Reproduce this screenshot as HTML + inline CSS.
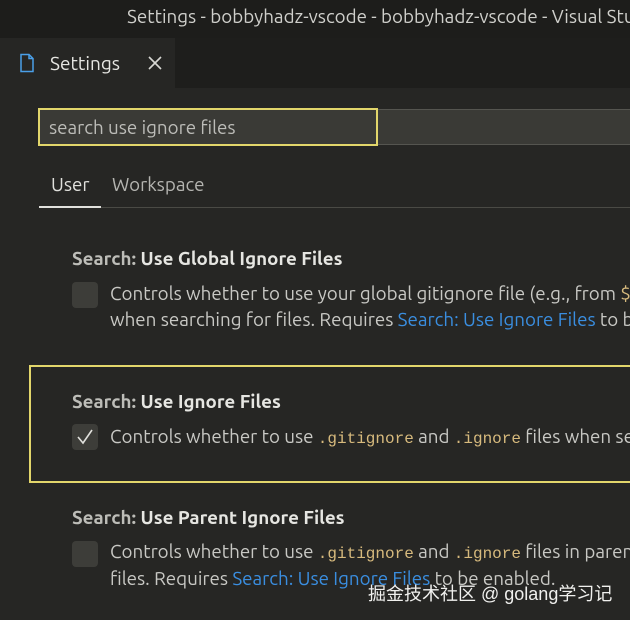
<!DOCTYPE html>
<html><head><meta charset="utf-8"><style>
*{margin:0;padding:0;box-sizing:border-box}
body{width:630px;height:620px;overflow:hidden;background:#262624;font-family:"Ubuntu","Liberation Sans",sans-serif;color:#c8c8c4;position:relative}
.abs{position:absolute;white-space:nowrap}
.title{top:0;left:0;width:630px;height:38px;background:#1d1d1b}
.tabbar{top:38px;left:0;width:630px;height:50px;background:#1e1e1c}
.tab{top:38px;left:0;width:175px;height:50px;background:#262624}
.t{font-size:18.8px;line-height:22px}
.bold{font-weight:bold;color:#e6e6e2}
.cat{font-weight:bold;color:#bdbdb8}
.cb{width:26px;height:26px;background:#3d3d39;border-radius:4px}
.code{font-family:"Liberation Mono",monospace;color:#d7ba7d;font-size:16px}
.link{color:#3a8ee0}
</style></head><body>
<div class="abs title"></div>
<div class="abs t" style="left:127px;top:5px;color:#cfcfcb;font-size:18.8px">Settings - bobbyhadz-vscode - bobbyhadz-vscode - Visual Studio Code</div>
<div class="abs tabbar"></div>
<div class="abs tab"></div>
<svg class="abs" style="left:19px;top:53px" width="16" height="20" viewBox="0 0 16 20"><path d="M2 1.5h8l4 4v13H2z M10 1.5v4h4" fill="none" stroke="#4a9fe8" stroke-width="1.5"/></svg>
<div class="abs t" style="left:50px;top:52px;color:#e6e6e2;font-size:19px">Settings</div>
<svg class="abs" style="left:148px;top:56px" width="14" height="14" viewBox="0 0 14 14"><path d="M1 1L13 13M13 1L1 13" stroke="#d8d8d4" stroke-width="1.6"/></svg>
<div class="abs" style="left:378px;top:109px;width:252px;height:36px;background:#3a3a36;border-top:1px solid #555550;border-bottom:1px solid #555550"></div>
<div class="abs" style="left:38px;top:108px;width:340px;height:38px;background:#3a3a36;border:2px solid #e2d66b"></div>
<div class="abs t" style="left:49px;top:116px;color:#bcbcb8;font-size:18.8px">search use ignore files</div>
<div class="abs t" style="left:51px;top:173px;color:#e0e0dc">User</div>
<div class="abs t" style="left:112px;top:173px;color:#b4b4b0">Workspace</div>
<div class="abs" style="left:39px;top:207px;width:591px;height:1px;background:#4a4a45"></div>
<div class="abs" style="left:39px;top:206px;width:62px;height:2px;background:#e0e0dc"></div>

<div class="abs t" style="left:72px;top:247px"><span class="cat">Search: </span><span class="bold">Use Global Ignore Files</span></div>
<div class="abs cb" style="left:72px;top:282px"></div>
<div class="abs t" style="left:110px;top:282px">Controls whether to use your global gitignore file (e.g., from <span style="color:#d7ba7d">$</span></div>
<div class="abs t" style="left:110px;top:308px">when searching for files. Requires <span class="link">Search: Use Ignore Files</span> to be enabled.</div>

<div class="abs" style="left:29px;top:365px;width:610px;height:118px;border:2px solid #e2d66b"></div>
<div class="abs t" style="left:72px;top:390px"><span class="cat">Search: </span><span class="bold">Use Ignore Files</span></div>
<div class="abs cb" style="left:72px;top:424px"></div>
<svg class="abs" style="left:75px;top:427px" width="20" height="20" viewBox="0 0 20 20"><path d="M3 10l5 6L17 3" fill="none" stroke="#e0e0dc" stroke-width="1.6"/></svg>
<div class="abs t" style="left:110px;top:425px">Controls whether to use <span class="code">.gitignore</span> and <span class="code">.ignore</span> files when searching for files.</div>

<div class="abs t" style="left:72px;top:506px"><span class="cat">Search: </span><span class="bold">Use Parent Ignore Files</span></div>
<div class="abs cb" style="left:72px;top:541px"></div>
<div class="abs t" style="left:110px;top:540px">Controls whether to use <span class="code">.gitignore</span> and <span class="code">.ignore</span> files in parent directories</div>
<div class="abs t" style="left:110px;top:567px">files. Requires <span class="link">Search: Use Ignore Files</span> to be enabled.</div>
<div class="abs" style="left:368px;top:580px;font-size:18px;color:#f0f0ee;font-family:'Liberation Sans','Noto Sans CJK SC',sans-serif">掘金技术社区 @ golang学习记</div>
</body></html>
